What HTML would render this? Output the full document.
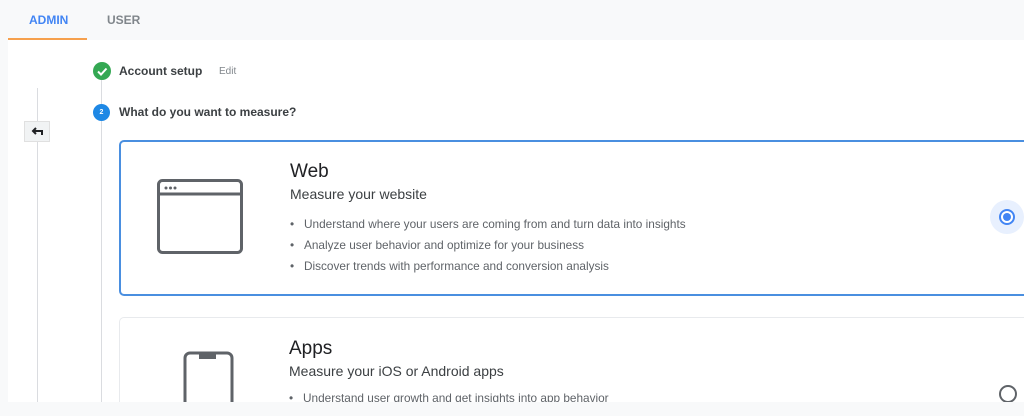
<!DOCTYPE html>
<html><head><style>
body{margin:0;width:1024px;height:416px;overflow:hidden;background:#f8f9fa;font-family:"Liberation Sans",Arial,sans-serif;position:relative;color:#202124}
.a{position:absolute}
.tab{font-size:12px;font-weight:bold;top:13px}
.main{left:8px;top:40px;width:1016px;height:362px;background:#fff}
.card{left:119px;width:930px;border-radius:5px;background:#fff}
.t{font-size:19px;color:#202124}
.s{font-size:14px;color:#3c4043}
ul{margin:0;padding:0 0 0 14px;font-size:11.8px;color:#5f6368;list-style:none}
li{position:relative;height:21px;line-height:21px;white-space:nowrap}
li:before{content:"•";position:absolute;left:-14px;color:#5f6368}
</style></head><body>
<div class="a tab" style="left:29px;color:#4285f4">ADMIN</div>
<div class="a tab" style="left:107px;color:#80868b">USER</div>
<div class="a" style="left:8px;top:38px;width:79px;height:2px;background:#f6a04d"></div>
<div class="a main"></div>
<div class="a" style="left:37px;top:88px;width:1px;height:314px;background:#dadce0"></div>
<div class="a" style="left:24px;top:121px;width:26px;height:21px;background:#f1f3f4;border:1px solid #e0e0e0;box-sizing:border-box"></div>
<svg class="a" style="left:31px;top:126px" width="12" height="11"><path d="M11 9V5H2M5 2L2 5l3 3" stroke="#202124" stroke-width="2" fill="none"/></svg>
<div class="a" style="left:101px;top:80px;width:1px;height:322px;background:#dadce0"></div>
<div class="a" style="left:93px;top:62px;width:18px;height:18px;border-radius:50%;background:#34a853"></div>
<svg class="a" style="left:93px;top:62px" width="18" height="18"><path d="M5 9.5l3 3 5.5-6" stroke="#fff" stroke-width="2" fill="none"/></svg>
<div class="a" style="left:119px;top:64px;font-size:12px;font-weight:bold;color:#3c4043">Account setup</div>
<div class="a" style="left:219px;top:66px;font-size:10px;color:#80868b">Edit</div>
<div class="a" style="left:93px;top:104px;width:17px;height:17px;border-radius:50%;background:#1e88e5;color:#fff;font-size:7px;text-align:center;line-height:17px;font-weight:bold">2</div>
<div class="a" style="left:119px;top:105px;font-size:12px;font-weight:bold;color:#3c4043">What do you want to measure?</div>
<div class="a card" style="top:140px;height:156px;border:2px solid #4a8fe0;box-sizing:border-box"></div>
<svg class="a" style="left:156px;top:178px" width="88" height="78"><rect x="2.5" y="2.5" width="83" height="72" rx="4" fill="none" stroke="#5f6368" stroke-width="3"/><line x1="2" y1="16" x2="86" y2="16" stroke="#5f6368" stroke-width="3"/><circle cx="10" cy="10" r="1.5" fill="#5f6368"/><circle cx="14.5" cy="10" r="1.5" fill="#5f6368"/><circle cx="19" cy="10" r="1.5" fill="#5f6368"/></svg>
<div class="a t" style="left:290px;top:161px">Web</div>
<div class="a s" style="left:290px;top:186px">Measure your website</div>
<ul class="a" style="left:290px;top:214px"><li>Understand where your users are coming from and turn data into insights</li><li>Analyze user behavior and optimize for your business</li><li>Discover trends with performance and conversion analysis</li></ul>
<div class="a" style="left:990px;top:200px;width:34px;height:34px;border-radius:50%;background:#e8f0fe"></div>
<div class="a" style="left:999px;top:209px;width:12px;height:12px;border-radius:50%;border:2px solid #4285f4;background:#fff"></div>
<div class="a" style="left:1003px;top:213px;width:8px;height:8px;border-radius:50%;background:#4285f4"></div>
<div class="a card" style="top:317px;height:90px;border:1px solid #e8eaed;border-bottom:none;box-sizing:border-box"></div>
<svg class="a" style="left:182px;top:350px" width="52" height="60"><path d="M3 52V8a5 5 0 0 1 5-5h37a5 5 0 0 1 5 5v44" fill="none" stroke="#5f6368" stroke-width="3"/><rect x="17" y="3" width="17" height="6" fill="#5f6368"/></svg>
<div class="a t" style="left:289px;top:338px">Apps</div>
<div class="a s" style="left:289px;top:363px">Measure your iOS or Android apps</div>
<ul class="a" style="left:289px;top:388px"><li>Understand user growth and get insights into app behavior</li></ul>
<div class="a" style="left:999px;top:385px;width:14px;height:14px;border-radius:50%;border:2px solid #5f6368"></div>
<div class="a" style="left:0;top:402px;width:1024px;height:14px;background:#f8f9fa"></div>
</body></html>
